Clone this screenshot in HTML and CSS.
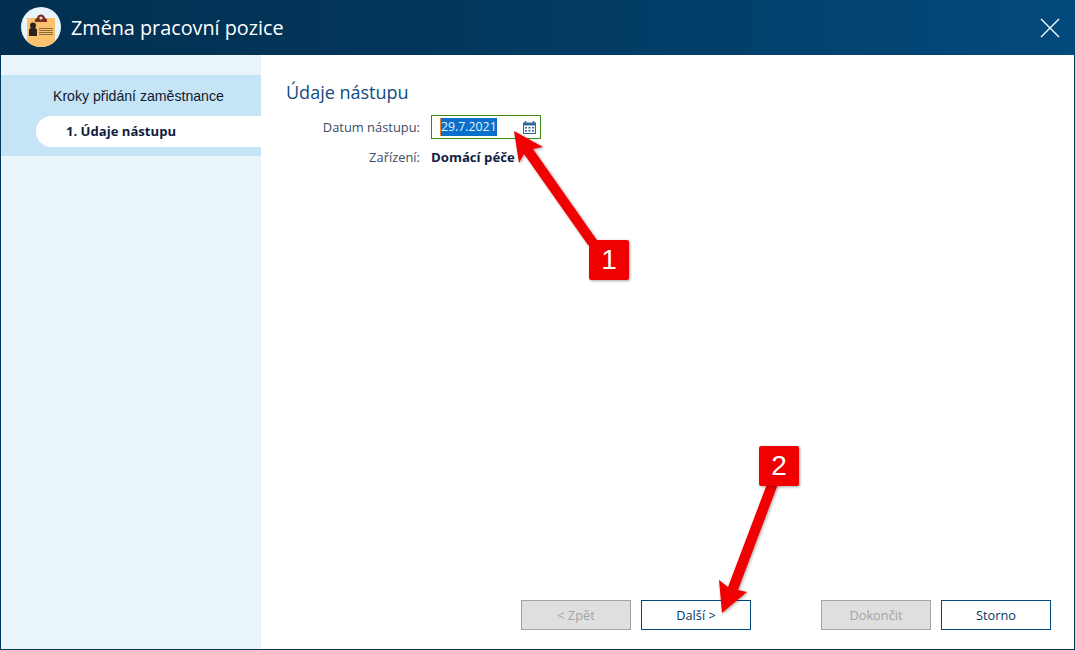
FILE: index.html
```html
<!DOCTYPE html>
<html lang="cs">
<head>
<meta charset="utf-8">
<title>Změna pracovní pozice</title>
<link rel="stylesheet" href="styles.css">
</head>
<body>
<div class="window">
  <header class="titlebar">
    <svg class="logo" width="40" height="40" viewBox="0 0 40 40">
      <circle cx="20" cy="20" r="20" fill="#e9f3fa"/>
      <path d="M6 11h28v23.300a20 20 0 0 1-28 0z" fill="#fbc26e"/>
      <path d="M14 15v-2c0-1 1-2 2-2 .3-2 2-3.500 4-3.500s3.700 1.500 4 3.500c1 0 2 1 2 2v2z" fill="#7b2c22"/>
      <circle cx="20" cy="11" r="1.600" fill="#f0d9c4"/>
      <circle cx="12" cy="18.500" r="3" fill="#2a2320"/>
      <path d="M8 29v-6c0-1 1-2 2-2h4c1 0 2 1 2 2v6z" fill="#2a2320"/>
      <path d="M18 21.500h14M18 23.500h14M18 25.500h14M18 27.500h14" stroke="#8a6a38" stroke-width="1"/>
    </svg>
    <h1 class="title">Změna pracovní pozice</h1>
    <svg class="close" width="20" height="20" viewBox="0 0 20 20">
      <path d="M1 1l18 18M19 1L1 19" stroke="#fff" stroke-width="1.300" fill="none"/>
    </svg>
  </header>
  <div class="content">
    <aside class="sidebar">
      <div class="steps">
        <div class="steps-title">Kroky přidání zaměstnance</div>
        <div class="step">1. Údaje nástupu</div>
      </div>
    </aside>
    <main class="main">
      <h2 class="heading">Údaje nástupu</h2>
      <div class="form">
        <div class="label">Datum nástupu:</div>
        <div class="field">
          <span class="selected">29.7.2021</span>
          <svg class="cal" width="13" height="14" viewBox="0 0 13 14">
            <path d="M0 2.500h13V14H0z" fill="#2a6a9c"/>
            <path d="M2.500 1v2M10.500 1v2" stroke="#2a6a9c" stroke-width="1.500"/>
            <rect x="1" y="5.500" width="11" height="7.500" fill="#fff"/>
            <path d="M2 7h2v1.500H2zM5.500 7h2v1.500h-2zM9 7h2v1.500H9zM2 10h2v1.500H2zM5.500 10h2v1.500h-2zM9 10h2v1.500H9z" fill="#2a6a9c"/>
          </svg>
        </div>
        <div class="label">Zařízení:</div>
        <div class="value">Domácí péče</div>
      </div>
      <div class="buttons">
        <button class="btn" disabled>&lt; Zpět</button>
        <button class="btn">Další &gt;</button>
        <button class="btn btn-gap" disabled>Dokončit</button>
        <button class="btn">Storno</button>
      </div>
    </main>
  </div>
  <svg class="arrows" width="1075" height="650" viewBox="0 0 1075 650">
    <defs>
      <filter id="soft" x="-20%" y="-20%" width="140%" height="140%">
        <feDropShadow dx="1" dy="1" stdDeviation="1.500" flood-color="#000" flood-opacity="0.35"/>
      </filter>
    </defs>
    <path d="M514 131L543 147L533 149L599 243L588 245L524 154L519 163z" fill="#f00000" filter="url(#soft)"/>
    <path d="M722 613L719 580L728 587L767 484L778 484L738 590L747 592z" fill="#f00000" filter="url(#soft)"/>
  </svg>
  <div class="badge badge-one">1</div>
  <div class="badge badge-two">2</div>
</div>
</body>
</html>
```
FILE: styles.css
```css
* { box-sizing: border-box; }
html, body { margin: 0; padding: 0; }
body { width: 1075px; height: 650px; overflow: hidden; background: #fff; font-family: "Open Sans", sans-serif; }
.window { position: relative; width: 1075px; height: 650px; display: flex; flex-direction: column; border: 1px solid #02385f; border-top: 0; }
.titlebar { height: 55px; margin: 0 -1px; flex: none; display: flex; align-items: center; padding: 0 15px 0 21px; background: linear-gradient(90deg, #022f50 0%, #02375c 40%, #024a7c 100%); }
.logo { flex: none; margin-top: -1px; }
.title { margin: 0 0 0 10px; flex: 1; font-size: 19.800px; font-weight: 400; color: #fff; line-height: 27px; }
.close { flex: none; }
.content { flex: 1; display: flex; min-height: 0; }
.sidebar { width: 260px; flex: none; background: #e9f5fb; padding-top: 20px; }
.steps { height: 81px; background: #c5e4f5; padding-top: 11px; padding-left: 35px; }
.steps-title { font-family: "Liberation Sans", sans-serif; font-size: 14.100px; line-height: 20px; color: #10192e; padding-left: 17px; }
.step { margin-top: 10px; height: 31px; line-height: 30px; background: #fff; border-radius: 15.500px 0 0 15.500px; padding-left: 30px; font-size: 13.100px; font-weight: 700; color: #101e42; }
.main { flex: 1; display: flex; flex-direction: column; padding: 25px 23px 19px 25px; min-width: 0; }
.heading { margin: 0; font-size: 18px; font-weight: 400; line-height: 25px; color: #0f4c81; }
.form { margin-top: 10px; display: grid; grid-template-columns: 134px 110px; column-gap: 11px; row-gap: 6px; align-items: center; }
.label { font-size: 12.900px; color: #3d4a66; text-align: right; line-height: 24px; }
.field { height: 24px; border: 1px solid #3f8a12; display: flex; align-items: center; justify-content: space-between; padding: 0 4px 0 8px; background: #fff; }
.selected { background: #0a70cc; color: #e8f2fb; font-size: 12.300px; line-height: 18px; border-left: 1px solid #f08020; }
.cal { flex: none; }
.value { font-size: 13.200px; font-weight: 700; color: #101e42; line-height: 24px; }
.buttons { margin-top: auto; display: flex; justify-content: flex-end; gap: 10px; }
.btn { width: 110px; height: 30px; padding: 0; background: #fff; border: 1px solid #024a7c; font-family: "Open Sans", sans-serif; font-size: 12.800px; color: #02385f; }
.btn:disabled { background: #dfdfdf; border-color: #a3a3a3; color: #a3a3a3; }
.btn-gap { margin-left: 60px; }
.arrows { position: absolute; left: -1px; top: 0; pointer-events: none; }
.badge { position: absolute; width: 40px; height: 40px; background: #f00000; border-radius: 2px; color: #fff; font-family: "Liberation Sans", sans-serif; font-size: 28px; line-height: 40px; text-align: center; box-shadow: 1px 1px 3px rgba(0,0,0,.35); }
.badge-one { left: 588px; top: 240px; }
.badge-two { left: 758px; top: 446px; }
```
